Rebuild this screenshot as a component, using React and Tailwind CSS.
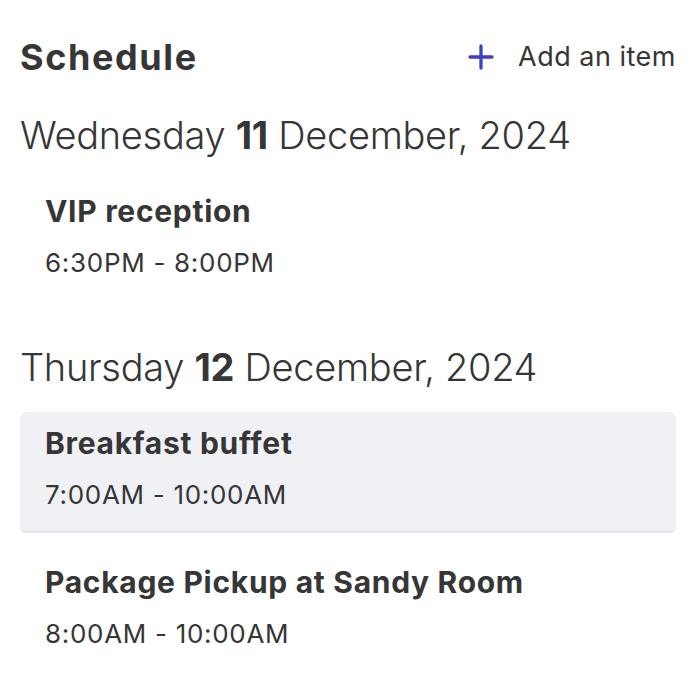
const days = [
  {
    weekday: "Wednesday",
    day: "11",
    rest: "December, 2024",
    items: [{ title: "VIP reception", time: "6:30PM - 8:00PM", active: false }],
  },
  {
    weekday: "Thursday",
    day: "12",
    rest: "December, 2024",
    items: [
      { title: "Breakfast buffet", time: "7:00AM - 10:00AM", active: true },
      { title: "Package Pickup at Sandy Room", time: "8:00AM - 10:00AM", active: false },
    ],
  },
];

export default function App() {
  return (
    <div
      className="w-[700px] h-[692px] bg-white pl-5 pr-6 pt-[37px] text-[#363636] overflow-hidden"
      style={{ fontFamily: "Inter, 'Noto Sans', sans-serif" }}
    >
      {/* Header */}
      <div className="flex items-center justify-between h-10">
        <h1 className="text-[36px] leading-10 font-bold tracking-[1.6px]">Schedule</h1>
        <button type="button" className="flex items-center gap-6">
          <svg width="26" height="26" viewBox="0 0 26 26" fill="none" stroke="#3d40c8" strokeWidth="3.3" strokeLinecap="round">
            <path d="M13 2v22M2 13h22" />
          </svg>
          <span className="text-[27px] leading-8 font-normal tracking-[0.5px]">Add an item</span>
        </button>
      </div>

      {days.map((d, i) => (
        <div key={d.day} className={i === 0 ? "mt-[36px]" : "mt-[44px]"}>
          <h2 className="text-[38px] leading-[44px] font-light tracking-[-0.3px]">
            {d.weekday} <span className="font-bold">{d.day}</span> {d.rest}
          </h2>
          <div className="mt-[23px] flex flex-col gap-[18px]">
            {d.items.map((it) => (
              <div
                key={it.title}
                className={`h-[121px] rounded-md px-[25px] pt-[13px] ${
                  it.active ? "bg-[#f0f1f5] border-b-2 border-[#e2e4ea]" : ""
                }`}
              >
                <div className="text-[30px] leading-9 font-bold tracking-[0.7px]">{it.title}</div>
                <div className="mt-[18px] text-[26px] leading-8 font-normal tracking-[0.7px]">{it.time}</div>
              </div>
            ))}
          </div>
        </div>
      ))}
    </div>
  );
}
